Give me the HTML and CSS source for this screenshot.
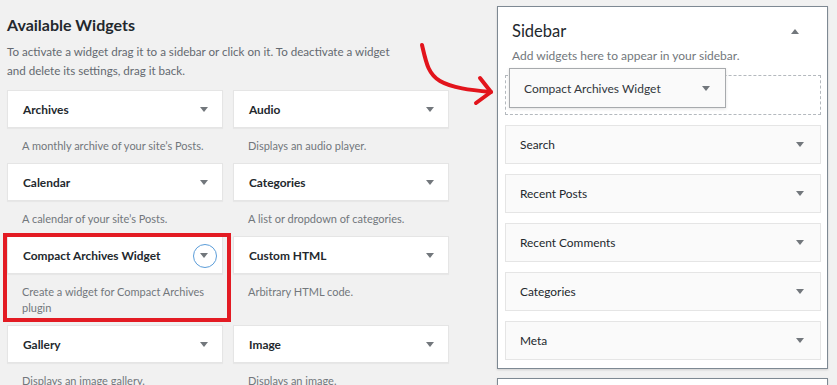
FILE: index.html
```html
<!DOCTYPE html>
<html lang="en">
<head>
  <meta charset="UTF-8" />
  <title>Widgets</title>
  <link rel="stylesheet" href="styles.css">
</head>
<body>

  <div class="page">
    <section class="available">
      <h2>Available Widgets</h2>
      <p class="intro">To activate a widget drag it to a sidebar or click on it. To deactivate a widget and delete its settings, drag it back.</p>

      <div class="widget-grid">
        <div class="widget">
          <div class="widget-top"><span class="widget-title">Archives</span><span class="toggle"></span></div>
          <p class="widget-desc">A monthly archive of your site’s Posts.</p>
        </div>
        <div class="widget">
          <div class="widget-top"><span class="widget-title">Audio</span><span class="toggle"></span></div>
          <p class="widget-desc">Displays an audio player.</p>
        </div>
        <div class="widget">
          <div class="widget-top"><span class="widget-title">Calendar</span><span class="toggle"></span></div>
          <p class="widget-desc">A calendar of your site’s Posts.</p>
        </div>
        <div class="widget">
          <div class="widget-top"><span class="widget-title">Categories</span><span class="toggle"></span></div>
          <p class="widget-desc">A list or dropdown of categories.</p>
        </div>
        <div class="widget">
          <div class="widget-top"><span class="widget-title">Compact Archives Widget</span><span class="toggle focused"></span></div>
          <p class="widget-desc">Create a widget for Compact Archives plugin</p>
        </div>
        <div class="widget">
          <div class="widget-top"><span class="widget-title">Custom HTML</span><span class="toggle"></span></div>
          <p class="widget-desc">Arbitrary HTML code.</p>
        </div>
        <div class="widget">
          <div class="widget-top"><span class="widget-title">Gallery</span><span class="toggle"></span></div>
          <p class="widget-desc">Displays an image gallery.</p>
        </div>
        <div class="widget">
          <div class="widget-top"><span class="widget-title">Image</span><span class="toggle"></span></div>
          <p class="widget-desc">Displays an image.</p>
        </div>
      </div>
    </section>

    <section class="sidebars">
      <div class="sidebar-panel">
        <div class="sidebar-head">
          <h3>Sidebar</h3>
          <span class="toggle up"></span>
        </div>
        <p class="sidebar-desc">Add widgets here to appear in your sidebar.</p>

        <div class="drop-zone">
          <div class="dragging">
            <span>Compact Archives Widget</span>
            <span class="toggle"></span>
          </div>
        </div>

        <div class="sidebar-widget"><span>Search</span><span class="toggle"></span></div>
        <div class="sidebar-widget"><span>Recent Posts</span><span class="toggle"></span></div>
        <div class="sidebar-widget"><span>Recent Comments</span><span class="toggle"></span></div>
        <div class="sidebar-widget"><span>Categories</span><span class="toggle"></span></div>
        <div class="sidebar-widget"><span>Meta</span><span class="toggle"></span></div>
      </div>
      <div class="sidebar-panel next"></div>
    </section>
  </div>

  <!-- hand-drawn annotations -->
  <div class="highlight"></div>
  <svg class="annot-arrow" width="837" height="385" viewBox="0 0 837 385">
    <path d="M422 45 C426 62 428 74 440 81 C452 88 470 90 491 92" fill="none" stroke="#e2141c" stroke-width="4" stroke-linecap="round" />
    <path d="M480 78 L491 92 L476 103" fill="none" stroke="#e2141c" stroke-width="4" stroke-linecap="round" stroke-linejoin="round" />
  </svg>

</body>
</html>
```

FILE: styles.css
```css
* {
  margin: 0;
  padding: 0;
  box-sizing: border-box;
}

body {
  font-family: 'Lato', 'Noto Sans', sans-serif;
  background: #f1f1f1;
  color: #23282d;
  overflow: hidden;
  width: 837px;
  height: 385px;
}

.page {
  display: flex;
  align-items: flex-start;
}

.available {
  width: 449px;
  padding-left: 7px;
}

.available h2 {
  font-size: 16px;
  font-weight: 700;
  line-height: 22px;
  margin-top: 14px;
  color: #23282d;
}

.intro {
  max-width: 402px;
  font-size: 11.6px;
  line-height: 19px;
  color: #646970;
  margin-top: 6px;
}

.widget-grid {
  display: grid;
  grid-template-columns: 216px 216px;
  column-gap: 10px;
  margin-top: 10px;
}

.widget-top {
  display: flex;
  align-items: center;
  justify-content: space-between;
  height: 38px;
  padding: 0 14px 0 15px;
  background: #fff;
  border: 1px solid #e5e5e5;
  box-shadow: 0 1px 1px rgba(0, 0, 0, 0.04);
}

.widget-title {
  font-size: 11.9px;
  font-weight: 700;
}

.widget-desc {
  font-size: 11px;
  line-height: 16px;
  color: #72777c;
  padding: 10px 8px 9px 15px;
}

.toggle {
  width: 0;
  height: 0;
  border-left: 4px solid transparent;
  border-right: 4px solid transparent;
  border-top: 5px solid #72777c;
}

.toggle.up {
  border-top: 0;
  border-bottom: 5px solid #72777c;
}

.toggle.focused {
  position: relative;
}

.toggle.focused::after {
  content: "";
  position: absolute;
  left: -11px;
  top: -14px;
  width: 22px;
  height: 22px;
  border: 1.5px solid #5b9dd9;
  border-radius: 50%;
}

.sidebars {
  margin-left: 48px;
  width: 331px;
  display: flex;
  flex-direction: column;
  gap: 9px;
  margin-top: 6px;
}

.sidebar-panel {
  background: #fff;
  border: 1px solid #7e8993;
  box-shadow: 0 1px 2px rgba(0, 0, 0, 0.15);
  padding: 0 6px 8px 7px;
}

.sidebar-panel.next {
  height: 40px;
}

.sidebar-head {
  display: flex;
  align-items: center;
  justify-content: space-between;
  padding: 13px 22px 0 7px;
}

.sidebar-head h3 {
  font-size: 16.5px;
  font-weight: 400;
  line-height: 22px;
}

.sidebar-desc {
  font-size: 12px;
  line-height: 18px;
  color: #72777c;
  padding: 5px 7px 0;
}

.drop-zone {
  position: relative;
  height: 40px;
  margin: 10px 0 10px;
  border: 1px dashed #b4b9be;
}

.dragging {
  position: absolute;
  left: 3px;
  top: -8px;
  width: 217px;
  height: 40px;
  display: flex;
  align-items: center;
  justify-content: space-between;
  padding: 0 15px 0 14px;
  background: #fafafa;
  border: 1px solid #a7aaad;
  box-shadow: 0 1px 3px rgba(0, 0, 0, 0.12);
  font-size: 12px;
  color: #32373c;
}

.sidebar-widget {
  display: flex;
  align-items: center;
  justify-content: space-between;
  height: 39px;
  margin-bottom: 10px;
  padding: 0 16px 0 14px;
  background: #fafafa;
  border: 1px solid #e5e5e5;
  font-size: 11.9px;
}

.sidebar-widget:last-child {
  margin-bottom: 0;
}

.highlight {
  position: absolute;
  left: 3px;
  top: 233px;
  width: 228px;
  height: 89px;
  border: 4px solid #e31b23;
}

.annot-arrow {
  position: absolute;
  left: 0;
  top: 0;
  pointer-events: none;
}
```
